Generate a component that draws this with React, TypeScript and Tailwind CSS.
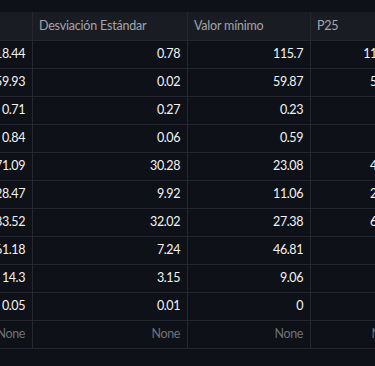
const columns = [
  { name: "Media", width: 120 },
  { name: "Desviación Estándar", width: 155 },
  { name: "Valor mínimo", width: 123 },
  { name: "P25", width: 97 },
];

const rows: (string | null)[][] = [
  ["118.44", "0.78", "115.7", "116.78"],
  ["59.93", "0.02", "59.87", "59.92"],
  ["0.71", "0.27", "0.23", "0.53"],
  ["0.84", "0.06", "0.59", "0.8"],
  ["71.09", "30.28", "23.08", "45.76"],
  ["28.47", "9.92", "11.06", "21.43"],
  ["83.52", "32.02", "27.38", "62.41"],
  ["61.18", "7.24", "46.81", "56.4"],
  ["14.3", "3.15", "9.06", "12.1"],
  ["0.05", "0.01", "0", "0.04"],
  [null, null, null, null],
];

export default function App() {
  return (
    <div
      className="w-[375px] h-[366px] bg-[#0e1117] overflow-hidden pt-3"
      style={{ fontFamily: '"Lato", "Noto Sans", sans-serif' }}
    >
      <div className="-ml-[87px] w-max">
        {/* header */}
        <div className="flex h-[29px] bg-[#1a1c24] border-b border-[#262730]">
          {columns.map((c) => (
            <div
              key={c.name}
              style={{ width: c.width }}
              className="shrink-0 flex items-center px-[6px] border-r border-[#262730] text-[12.5px] tracking-[-0.2px] text-[#a3a5ab] whitespace-nowrap"
            >
              {c.name}
            </div>
          ))}
        </div>

        {/* body */}
        {rows.map((r, i) => (
          <div key={i} className="flex h-[28px] border-b border-[#262730]">
            {r.map((v, j) => (
              <div
                key={j}
                style={{ width: columns[j].width }}
                className="shrink-0 flex items-center justify-end pl-[8px] pr-[7px] border-r border-[#262730] text-[12.5px] tracking-[-0.4px] whitespace-nowrap"
              >
                {v === null ? (
                  <span className="text-[#6f7177]">None</span>
                ) : (
                  <span className="text-[#f3f4f6]">{v}</span>
                )}
              </div>
            ))}
          </div>
        ))}
      </div>
    </div>
  );
}
